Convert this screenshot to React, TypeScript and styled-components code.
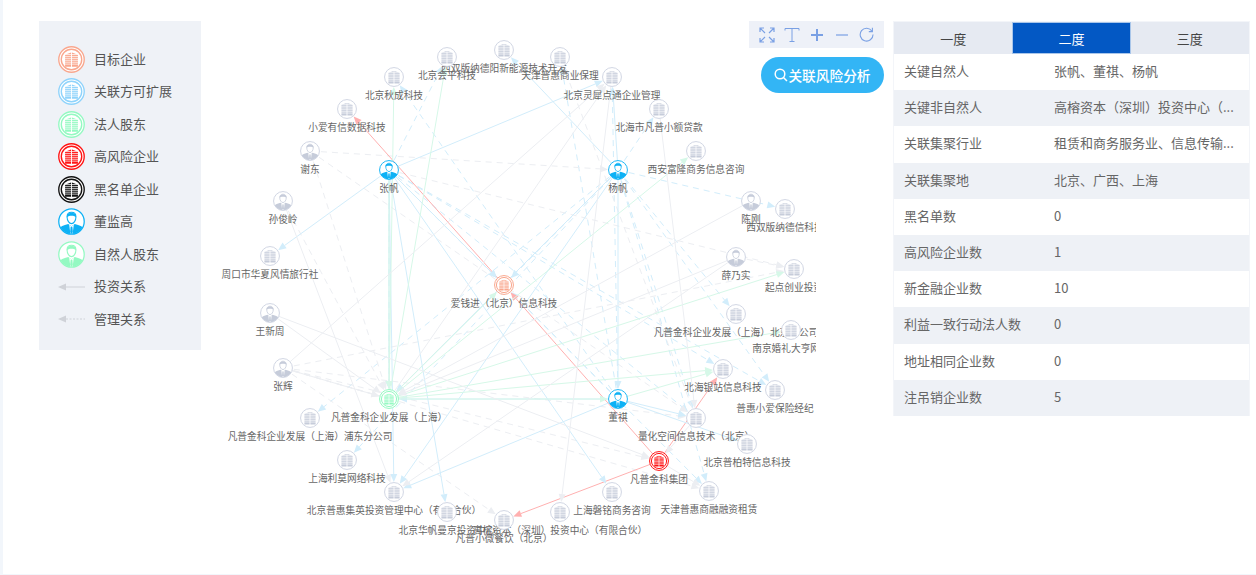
import React from "react";
import styled, { createGlobalStyle } from "styled-components";

const GlobalStyle = createGlobalStyle`
  html, body {
    margin: 0;
    padding: 0;
    background: #ffffff;
  }
  body {
    font-family: "Noto Sans CJK SC", "Liberation Sans", sans-serif;
  }
`;

type Tone = "gray" | "target" | "expand" | "legal" | "risk" | "black" | "blue" | "green";

const toneColor: Record<Tone, string> = {
  gray: "#cdd3e1",
  target: "#f9a78e",
  expand: "#8fd3fb",
  legal: "#94f9c2",
  risk: "#ff1414",
  black: "#111111",
  blue: "#0db1f5",
  green: "#94f9c2",
};

const Page = styled.div`
  width: 1256px;
  height: 575px;
  padding-left: 3px;
  box-sizing: border-box;
  background: #f2f6fb;
  overflow: hidden;
`;

const Panel = styled.div`
  position: relative;
  display: flex;
  align-items: flex-start;
  height: 574px;
  background: #ffffff;
`;

const Legend = styled.ul`
  list-style: none;
  flex: none;
  width: 162px;
  height: 329px;
  margin: 21px 0 0 36px;
  padding: 22px 0 0 19px;
  box-sizing: border-box;
  background: #eff2f7;
`;

const LegendRow = styled.li`
  display: flex;
  align-items: center;
  gap: 9px;
  height: 32.5px;
  font-size: 13px;
  color: #555555;
`;

const LegendName = styled.span`
  margin-bottom: 2px;
`;

const Canvas = styled.div`
  position: relative;
  flex: none;
  width: 615px;
  height: 574px;
  overflow: hidden;
`;

const EdgeLayer = styled.svg`
  display: block;
  width: 615px;
  height: 574px;
`;

const NodeWrap = styled.div`
  position: absolute;
  width: 0;
  height: 0;
  display: flex;
  flex-direction: column;
  align-items: center;
`;

const NodeIcon = styled.div`
  flex: none;
  width: 20px;
  height: 20px;
  margin-top: -10px;
`;

const NodeLabel = styled.div`
  flex: none;
  margin-top: 1px;
  height: 14px;
  line-height: 14px;
  font-size: 9.7px;
  color: #666666;
  white-space: nowrap;
`;

const Tools = styled.div`
  position: absolute;
  top: 21px;
  left: 746px;
  display: flex;
  flex-direction: column;
  align-items: flex-end;
  gap: 9px;
`;

const Toolbar = styled.div`
  display: grid;
  grid-template-columns: repeat(5, 25px);
  justify-items: center;
  align-items: center;
  box-sizing: border-box;
  width: 135px;
  height: 27px;
  padding-left: 5px;
  background: #eef1f8;
`;

const AnalyzeButton = styled.button`
  display: flex;
  align-items: center;
  justify-content: center;
  width: 123px;
  height: 36px;
  padding: 0;
  border: 0;
  border-radius: 18px;
  background: #33b5f5;
  color: #ffffff;
  font-family: inherit;
  font-size: 13.7px;
  font-weight: 500;
`;

const Side = styled.div`
  flex: none;
  width: 357px;
  margin: 21px 0 0 77px;
  border: 1px solid #f3f5f9;
  border-bottom: 0;
  box-sizing: border-box;
`;

const Tabs = styled.div`
  display: grid;
  grid-template-columns: repeat(3, 1fr);
  height: 32px;
`;

const Tab = styled.div<{ $active?: boolean }>`
  display: flex;
  align-items: center;
  justify-content: center;
  font-size: 13px;
  color: ${(p) => (p.$active ? "#ffffff" : "#444444")};
  background: ${(p) => (p.$active ? "#0358c4" : "#e6eaf2")};
  box-shadow: ${(p) => (p.$active ? "inset 0 0 0 1px #a9c6ea" : "none")};
`;

const Row = styled.div<{ $alt: boolean }>`
  display: flex;
  align-items: center;
  box-sizing: border-box;
  height: 36.2px;
  padding: 0 0 3px 10px;
  font-size: 13px;
  color: #666666;
  background: ${(p) => (p.$alt ? "#eef1f6" : "#ffffff")};
`;

const RowName = styled.div`
  flex: none;
  width: 150px;
`;

const RowValue = styled.div`
  white-space: nowrap;
`;

// building drawn in a 28 box, centred on 0,0
const Building: React.FC<{ color: string }> = ({ color }) => {
  const stripes = [-5.5, -3.4, -1.3, 0.8, 2.9, 5];
  return (
    <g transform="scale(1.12)">
      <path d="M-7 -5.2 L-0.5 -7.6 L-0.5 8 L-7 8 Z" fill={color} />
      <path d="M0.5 -7.6 L7 -5.2 L7 8 L0.5 8 Z" fill={color} />
      {stripes.map((y) => (
        <line key={y} x1="-8" x2="8" y1={y} y2={y + 0.1} stroke="#ffffff" strokeWidth="0.8" />
      ))}
    </g>
  );
};

const CompanyIcon: React.FC<{ tone: Tone; size: number }> = ({ tone, size }) => {
  const color = toneColor[tone];
  if (tone === "gray") {
    return (
      <svg width={size} height={size} viewBox="-14 -14 28 28" style={{ display: "block" }}>
        <circle r="13.2" fill="#ffffff" stroke={color} strokeWidth="1.3" />
        <Building color="#c6ccda" />
      </svg>
    );
  }
  return (
    <svg width={size} height={size} viewBox="-14 -14 28 28" style={{ display: "block" }}>
      <circle r="13.2" fill="#ffffff" stroke={color} strokeWidth="1.4" />
      <circle r="10.6" fill="#ffffff" stroke={color} strokeWidth="1.4" />
      <g transform="scale(0.85)">
        <Building color={color} />
      </g>
    </svg>
  );
};

const PersonIcon: React.FC<{ tone: Tone; size: number }> = ({ tone, size }) => {
  const color = tone === "gray" ? "#c6ccda" : toneColor[tone];
  const ring = toneColor[tone];
  const id = `clip-${tone}-${size}`;
  return (
    <svg width={size} height={size} viewBox="-14 -14 28 28" style={{ display: "block" }}>
      <defs>
        <clipPath id={id}>
          <circle r="13" />
        </clipPath>
      </defs>
      <circle r="13.2" fill="#ffffff" />
      <g clipPath={`url(#${id})`}>
        <path d="M-13 14 L-13 7.5 Q-11 4.5 -3.4 2.6 L0 5 L3.4 2.6 Q11 4.5 13 7.5 L13 14 Z" fill={color} />
        <path d="M-2.4 3.2 L0 5.2 L2.4 3.2 L1 14 L-1 14 Z" fill="#ffffff" />
        <path d="M-0.9 5.4 L0.9 5.4 L1.4 11 L0 13 L-1.4 11 Z" fill={color} />
      </g>
      <path d="M-4.6 -5 C-4.6 -11 4.6 -11 4.6 -5 C4.6 -1 2.4 2.2 0 2.2 C-2.4 2.2 -4.6 -1 -4.6 -5 Z" fill="#ffffff" stroke={color} strokeWidth="1.1" />
      <path d="M-4.8 -4.2 C-5.4 -10.6 5.4 -10.6 4.8 -4.2 C3.8 -6.4 -3.8 -6.4 -4.8 -4.2 Z" fill={color} />
      <circle r="13.2" fill="none" stroke={ring} strokeWidth="1.3" />
    </svg>
  );
};

const legendItems: { name: string; tone: Tone; person?: boolean }[] = [
  { name: "目标企业", tone: "target" },
  { name: "关联方可扩展", tone: "expand" },
  { name: "法人股东", tone: "legal" },
  { name: "高风险企业", tone: "risk" },
  { name: "黑名单企业", tone: "black" },
  { name: "董监高", tone: "blue", person: true },
  { name: "自然人股东", tone: "green", person: true },
];

const LegendArrow: React.FC<{ dashed?: boolean }> = ({ dashed }) => (
  <svg width="27" height="10" viewBox="0 0 27 10" style={{ display: "block" }}>
    <path d="M0 5 L8 1.5 L8 8.5 Z" fill="#cfd2d8" />
    <line x1="8" x2="27" y1="5" y2="5" stroke="#cfd2d8" strokeWidth="1" strokeDasharray={dashed ? "2 1.5" : undefined} />
  </svg>
);

interface GraphNode {
  x: number;
  y: number;
  label: string;
  tone?: Tone;
  person?: boolean;
}

// page coordinates, taken from the layout of the graph
const nodes: Record<string, GraphNode> = {
  xsbn: { x: 504, y: 50, label: "西双版纳德阳新能源技术开发" },
  hp: { x: 447, y: 57, label: "北京会平科技" },
  tjbl: { x: 560, y: 57, label: "天津普惠商业保理" },
  qc: { x: 394, y: 77, label: "北京秋成科技" },
  lx: { x: 612, y: 77, label: "北京灵犀点通企业管理" },
  xa: { x: 347, y: 109, label: "小爱有信数据科技" },
  bh: { x: 659, y: 109, label: "北海市凡普小额贷款" },
  xd: { x: 310, y: 151, label: "谢东", person: true },
  fl: { x: 696, y: 151, label: "西安富隆商务信息咨询" },
  zf: { x: 389, y: 170, label: "张帆", person: true, tone: "blue" },
  yf: { x: 618, y: 170, label: "杨帆", person: true, tone: "blue" },
  sjl: { x: 283, y: 201, label: "孙俊岭", person: true },
  cg: { x: 751, y: 201, label: "陈刚", person: true },
  dx: { x: 785, y: 209, label: "西双版纳德信科技" },
  zk: { x: 270, y: 256, label: "周口市华夏风情旅行社" },
  xns: { x: 736, y: 257, label: "薛乃实", person: true },
  qd: { x: 794, y: 269, label: "起点创业投资" },
  aqj: { x: 504, y: 285, label: "爱钱进（北京）信息科技", tone: "target" },
  wxz: { x: 270, y: 313, label: "王新周", person: true },
  bjfgs: { x: 736, y: 314, label: "凡普金科企业发展（上海）北京分公司" },
  nj: { x: 791, y: 330, label: "南京婚礼大亨网络" },
  zh: { x: 283, y: 368, label: "张辉", person: true },
  yz: { x: 723, y: 369, label: "北海银站信息科技" },
  xb: { x: 775, y: 390, label: "普惠小爱保险经纪" },
  fp: { x: 389, y: 399, label: "凡普金科企业发展（上海）", tone: "legal" },
  dq: { x: 618, y: 399, label: "董祺", person: true, tone: "blue" },
  pd: { x: 310, y: 418, label: "凡普金科企业发展（上海）浦东分公司" },
  lh: { x: 696, y: 418, label: "量化空间信息技术（北京）" },
  bt: { x: 747, y: 444, label: "北京普柏特信息科技" },
  lm: { x: 347, y: 460, label: "上海利莫网络科技" },
  jt: { x: 659, y: 461, label: "凡普金科集团", tone: "risk" },
  rz: { x: 709, y: 491, label: "天津普惠商融融资租赁" },
  jy: { x: 394, y: 492, label: "北京普惠集英投资管理中心（有限合伙）" },
  pm: { x: 612, y: 492, label: "上海磐铭商务咨询" },
  hf: { x: 447, y: 512, label: "北京华帆曼京投资中心" },
  gr: { x: 560, y: 512, label: "高榕资本（深圳）投资中心（有限合伙）" },
  xw: { x: 504, y: 520, label: "凡普小微餐饮（北京）" },
};

const edgeColor = { b: "#d2edfb", g: "#d6f8e8", e: "#eceef2", r: "#ffb0b0" };
type EdgeColor = keyof typeof edgeColor;

// "from to" pairs by colour; the dashed groups are the management relations
const solid: Record<EdgeColor, string> = {
  r: "aqj xa,jt aqj,jt yz,jt xw",
  b: "zf zk,zf hf,zf fp,zf jy,zf lx,zf pm,yf fp,yf lx,yf xsbn,yf jy,dq fp,dq jy,dq lh,dq bt,zf aqj,yf dq",
  g: "fp hp,fp qc,fp aqj,fp fl,fp qd,fp nj,fp yz,fp dq,dq yz,zf fp",
  e: "fp lx,bh lh,lx gr,xns fp,cg fp,sjl jy,wxz fp,zh lx,xns jy,zh fp,jt rz,lh jt,wxz jt",
};
const dashed: Record<EdgeColor, string> = {
  r: "",
  b: "zf hp,zf aqj,zf xb,zf lh,zf yz,zf rz,yf bh,yf dx,yf lm,yf pd,yf lh,yf rz,yf bjfgs,dq lx,dq tjbl,dq qc,zf fp,yf fp,yf aqj,dq aqj,yf xb",
  g: "",
  e: "xd fp,xd yf,zh jt,zh xw,zh fp,xns qd,sjl fp,zf qd,zh rz,zh lh,zh qd,xd lh,lh tjbl",
};

const Edge: React.FC<{ from: GraphNode; to: GraphNode; color: string; isDashed: boolean }> = ({
  from,
  to,
  color,
  isDashed,
}) => {
  const dx = to.x - from.x;
  const dy = to.y - from.y;
  const len = Math.hypot(dx, dy);
  const ux = dx / len;
  const uy = dy / len;
  const tipX = to.x - ux * 10;
  const tipY = to.y - uy * 10;
  const baseX = tipX - ux * 8;
  const baseY = tipY - uy * 8;
  const head = `${tipX},${tipY} ${baseX - uy * 3.5},${baseY + ux * 3.5} ${baseX + uy * 3.5},${baseY - ux * 3.5}`;
  return (
    <g>
      <line
        x1={from.x}
        y1={from.y}
        x2={baseX}
        y2={baseY}
        stroke={color}
        strokeWidth="1"
        strokeDasharray={isDashed ? "6 5" : undefined}
      />
      <polygon points={head} fill={color} />
    </g>
  );
};

const renderEdges = (groups: Record<EdgeColor, string>, isDashed: boolean) =>
  (Object.keys(groups) as EdgeColor[]).flatMap((c) =>
    groups[c]
      .split(",")
      .filter(Boolean)
      .map((pair) => {
        const [a, b] = pair.split(" ");
        return (
          <Edge
            key={`${c}-${pair}-${isDashed}`}
            from={nodes[a]}
            to={nodes[b]}
            color={edgeColor[c]}
            isDashed={isDashed}
          />
        );
      })
  );

const CANVAS_LEFT = 201;

const tableRows = [
  ["关键自然人", "张帆、董祺、杨帆"],
  ["关键非自然人", "高榕资本（深圳）投资中心（..."],
  ["关联集聚行业", "租赁和商务服务业、信息传输..."],
  ["关联集聚地", "北京、广西、上海"],
  ["黑名单数", "0"],
  ["高风险企业数", "1"],
  ["新金融企业数", "10"],
  ["利益一致行动法人数", "0"],
  ["地址相同企业数", "0"],
  ["注吊销企业数", "5"],
];

const toolStroke = "#7aa0e4";

const App: React.FC = () => {
  return (
    <Page>
      <GlobalStyle />
      <Panel>
        <Legend>
          {legendItems.map((item) => (
            <LegendRow key={item.name}>
              {item.person ? (
                <PersonIcon tone={item.tone} size={27} />
              ) : (
                <CompanyIcon tone={item.tone} size={27} />
              )}
              <LegendName>{item.name}</LegendName>
            </LegendRow>
          ))}
          <LegendRow>
            <LegendArrow />
            <LegendName>投资关系</LegendName>
          </LegendRow>
          <LegendRow>
            <LegendArrow dashed />
            <LegendName>管理关系</LegendName>
          </LegendRow>
        </Legend>
        <Canvas>
          <EdgeLayer viewBox={`${CANVAS_LEFT} 0 615 574`}>
            {renderEdges(dashed, true)}
            {renderEdges(solid, false)}
          </EdgeLayer>
          {Object.entries(nodes).map(([key, node]) => (
            <NodeWrap key={key} style={{ left: node.x - CANVAS_LEFT, top: node.y }}>
              <NodeIcon>
                {node.person ? (
                  <PersonIcon tone={node.tone || "gray"} size={20} />
                ) : (
                  <CompanyIcon tone={node.tone || "gray"} size={20} />
                )}
              </NodeIcon>
              <NodeLabel>{node.label}</NodeLabel>
            </NodeWrap>
          ))}
        </Canvas>
        <Tools>
          <Toolbar>
            <svg width="16" height="16" viewBox="0 0 16 16" fill="none" stroke={toolStroke} strokeWidth="1.2">
              <path d="M1 5 V1 H5 M1 1 L6 6 M11 1 H15 V5 M15 1 L10 6 M1 11 V15 H5 M1 15 L6 10 M15 11 V15 H11 M15 15 L10 10" />
            </svg>
            <svg width="16" height="16" viewBox="0 0 16 16" fill="none" stroke={toolStroke} strokeWidth="1">
              <path d="M1 3.5 V1.5 H15 V3.5 M8 1.5 V14.5 M5.5 14.5 H10.5" />
            </svg>
            <svg width="14" height="14" viewBox="0 0 14 14" fill="none" stroke={toolStroke} strokeWidth="2">
              <path d="M7 1 V13 M1 7 H13" />
            </svg>
            <svg width="14" height="14" viewBox="0 0 14 14" fill="none" stroke={toolStroke} strokeWidth="1.2">
              <path d="M1 7 H13" />
            </svg>
            <svg width="15" height="15" viewBox="0 0 15 15" fill="none" stroke={toolStroke} strokeWidth="1.1">
              <path d="M13 4.2 A6.4 6.4 0 1 0 14 7.5 M13.4 0.8 V4.6 H9.8" />
            </svg>
          </Toolbar>
          <AnalyzeButton>
            <svg width="14" height="14" viewBox="0 0 14 14" fill="none" stroke="#ffffff" strokeWidth="1.5">
              <circle cx="6" cy="6" r="4.8" />
              <path d="M9.5 9.5 L13 13" />
            </svg>
            关联风险分析
          </AnalyzeButton>
        </Tools>
        <Side>
          <Tabs>
            <Tab>一度</Tab>
            <Tab $active>二度</Tab>
            <Tab>三度</Tab>
          </Tabs>
          {tableRows.map(([name, value], i) => (
            <Row key={name} $alt={i % 2 === 1}>
              <RowName>{name}</RowName>
              <RowValue>{value}</RowValue>
            </Row>
          ))}
        </Side>
      </Panel>
    </Page>
  );
};

export default App;
